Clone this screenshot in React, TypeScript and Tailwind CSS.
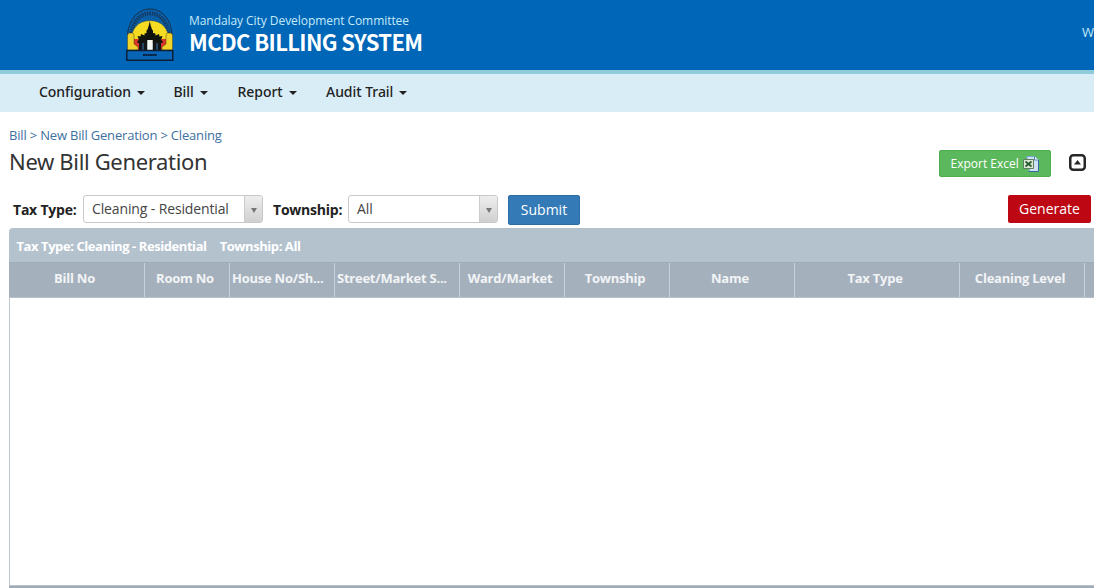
import type { ReactNode } from "react";

function Emblem() {
  return (
    <svg width="50" height="54" viewBox="0 0 50 54" className="block">
      <path d="M2 45V26C4 11 12 .8 25 .8S46 11 47.500 26v19z" fill="#0a5fa8" />
      <path d="M2.500 27C4 11 13 1 25 1s21 10 22 26" fill="none" stroke="#17324f" strokeWidth="1" />
      <path d="M6.500 25C8.500 13 15 5.500 25 5.500S41.500 13 43.500 25" fill="none" stroke="#14395f" strokeWidth="4" strokeDasharray="1.400 1" />
      <path d="M6 33C6 21 13 12.500 25 12.500S44 21 44 33v8H6z" fill="#f5dc22" stroke="#1c4167" strokeWidth=".6" />
      <path d="M9 31h6v11H9zM35.500 31h6v11h-6z" fill="#d8362b" />
      <path d="M24.800 13l.9 4.500 1.300 4 1 1v2.500l2.500.5v2l3.500-1.500.5 2.500 3-.500-1.500 4 1.500 1v2H12.500v-2l1.500-1-1.500-4 3 .5.500-2.500 3.500 1.500v-2l2-.5v-2.500l1-1 1.300-4z" fill="#11140e" />
      <path d="M15 35h20v7H15z" fill="#244563" />
      <path d="M14 34h3v8h-3zM19 34h3v8h-3zM28 34h3v8h-3zM33 34h3v8h-3z" fill="#141414" />
      <path d="M22.300 32h5.400v10h-5.400z" fill="#f4f6f2" />
      <path d="M2.500 27l1.500-2h4l1 2v9l4 3v3H2.500zM47.500 27L46 25h-4l-1 2v9l-4 3v3h10.500z" fill="#f2d329" stroke="#4c4516" strokeWidth=".5" />
      <path d="M1.800 42.500h46v9.700h-46z" fill="#0865b5" stroke="#0b1f3a" strokeWidth="1.500" />
      <path d="M18 47h14" stroke="#0b1f3a" strokeWidth="2.200" strokeDasharray="2 .3" />
    </svg>
  );
}

function Caret() {
  return (
    <svg width="8" height="4" viewBox="0 0 8 4" className="mt-[3px] ml-[6px]">
      <path d="M0 0h8L4 4z" fill="#222" />
    </svg>
  );
}

function NavItem({ children, className }: { children: ReactNode; className: string }) {
  return (
    <div className={`flex shrink-0 items-center whitespace-nowrap ${className}`}>
      {children}
      <Caret />
    </div>
  );
}

function Select({ value, className }: { value: string; className: string }) {
  return (
    <div className={`flex h-7 shrink-0 overflow-hidden rounded-[3px] border border-[#c8c8c8] bg-white ${className}`}>
      <span className="flex-1 pl-2 text-[14px] leading-[26px] tracking-[-0.13px] whitespace-nowrap text-[#444]">{value}</span>
      <span className="flex w-[18px] items-center justify-center border-l border-[#ccc] bg-linear-to-t from-[#d0d0d0] to-[#eeeeee]">
        <svg width="6" height="5" viewBox="0 0 6 5" className="mt-[3px]">
          <path d="M0 0h6L3 5z" fill="#777" />
        </svg>
      </span>
    </div>
  );
}

function ExcelIcon() {
  return (
    <svg width="16" height="16" viewBox="0 0 16 16" className="ml-[4px]">
      <path d="M4 .5h7.500l4 3.500v11.500H7" fill="#cfe2f5" />
      <path d="M4 3V.5h7.500l4 3.500v11.500H6V13" fill="none" stroke="#79a7d3" />
      <path d="M15.500 4v11.500H6" fill="none" stroke="#3268a0" />
      <path d="M11.500.5V4h4" fill="#f7fbff" stroke="#4f83b5" />
      <path d="M.5 3.500h10v9H.5z" fill="#dde9d6" stroke="#5d7f60" />
      <path d="M2.500 5.500l6 5M8.500 5.500l-6 5" stroke="#235a2c" strokeWidth="1.700" />
    </svg>
  );
}

const columns = [
  { label: "Bill No", width: "w-[136px]", align: "text-center pr-[4px]" },
  { label: "Room No", width: "w-[85px]", align: "text-center pr-[4px]" },
  { label: "House No/Sh...", width: "w-[105px]", align: "pl-[2px]" },
  { label: "Street/Market S...", width: "w-[125px]", align: "pl-[2px]" },
  { label: "Ward/Market", width: "w-[105px]", align: "text-center pr-[4px]" },
  { label: "Township", width: "w-[105px]", align: "text-center pr-[4px]" },
  { label: "Name", width: "w-[125px]", align: "text-center pr-[4px]" },
  { label: "Tax Type", width: "w-[165px]", align: "text-center pr-[4px]" },
  { label: "Cleaning Level", width: "w-[125px]", align: "text-center pr-[4px]" },
];

export default function App() {
  return (
    <div className="flex h-[588px] w-full flex-col overflow-hidden bg-white font-['Open_Sans',sans-serif] text-[#222]">
      <header className="flex h-[74px] shrink-0 border-b-4 border-[#90cbda] bg-[#0066b7]">
        <div className="ml-[125px] pt-[8px]">
          <Emblem />
        </div>
        <div className="ml-[14px] pt-[12px] whitespace-nowrap">
          <div className="text-[12px] leading-[17px] tracking-[-0.06px] text-[#c4eafa]">Mandalay City Development Committee</div>
          <div className="font-['Noto_Sans_CJK_SC',sans-serif] text-[22px] leading-[24px] font-bold tracking-[-0.63px] text-white">MCDC BILLING SYSTEM</div>
        </div>
        <div className="mt-[22px] ml-auto w-[12px] overflow-hidden text-[13px] leading-[20px] whitespace-nowrap text-[#c4eafa]">W</div>
      </header>

      <nav className="flex h-[38px] shrink-0 items-center bg-[#d9edf7] pb-[3px] pl-[39px] font-['Noto_Sans',sans-serif] text-[14px] font-medium tracking-[-0.04px]">
        <NavItem className="w-[134.500px]">Configuration</NavItem>
        <NavItem className="w-[64px]">Bill</NavItem>
        <NavItem className="w-[88.500px]">Report</NavItem>
        <NavItem className="w-[90px]">Audit Trail</NavItem>
      </nav>

      <main className="flex min-h-0 flex-1 flex-col pl-[9px]">
        <div className="mt-[14px] h-[19px] shrink-0 text-[13px] leading-[19px] tracking-[-0.18px] text-[#40709f]">Bill &gt; New Bill Generation &gt; Cleaning</div>
        <div className="flex h-[46px] shrink-0">
          <h1 className="mt-[2px] font-['Noto_Sans',sans-serif] text-[22px] leading-[28px] tracking-[-0.34px] text-[#333]">New Bill Generation</h1>
          <div className="mt-[5px] ml-auto flex h-[27px] w-[112px] items-center rounded-[2px] border border-[#4cae4c] bg-[#5cb85c] pl-[10.500px] text-[12px] whitespace-nowrap text-white">
            Export Excel
            <ExcelIcon />
          </div>
          <svg width="17" height="17" viewBox="0 0 17 17" className="mt-[9px] mr-[8px] ml-[18px]">
            <rect x="1.250" y="1.250" width="14.500" height="14.500" rx="3" fill="none" stroke="#272727" strokeWidth="2.500" />
            <path d="M5 10.500h7l-3.500-4.500z" fill="#272727" />
          </svg>
        </div>

        <div className="flex h-[37px] shrink-0 pt-[4px] text-[14px]">
          <span className="w-[74px] pl-1 leading-[30px] font-bold tracking-[-0.22px] whitespace-nowrap">Tax Type:</span>
          <Select value="Cleaning - Residential" className="w-[180px]" />
          <span className="ml-[10px] w-[75px] leading-[30px] font-bold tracking-[-0.22px] whitespace-nowrap">Township:</span>
          <Select value="All" className="w-[150px]" />
          <button className="ml-[10px] h-[30px] w-[72px] rounded-[2px] border border-[#2e6da4] bg-[#337ab7] pb-[2px] text-white">Submit</button>
          <button className="mr-[3px] ml-auto h-[28px] w-[83px] rounded-[2px] bg-[#bd0813] pb-[1px] text-white">Generate</button>
        </div>

        <section className="flex min-h-0 flex-1 flex-col rounded-tl-[4px]">
          <div className="flex h-[34px] shrink-0 items-center gap-[13px] rounded-tl-[4px] bg-[#b4c2ce] pt-[3px] pl-[7.500px] text-[13px] font-bold tracking-[-0.43px] text-white">
            <span>Tax Type: Cleaning - Residential</span>
            <span>Township: All</span>
          </div>
          <div className="flex h-[36px] shrink-0 overflow-hidden border-y border-t-[#9eabb8] border-b-[#b5c0ca] bg-[#a5b0bd]">
            {columns.map((column) => (
              <div
                key={column.label}
                className={`${column.width} ${column.align} shrink-0 overflow-hidden border-r border-[#c9d2dc] text-[13px] leading-[30px] font-bold tracking-[-0.24px] whitespace-nowrap text-[#f2f4f6]`}
              >
                {column.label}
              </div>
            ))}
          </div>
          <div className="min-h-0 flex-1 border-l border-[#bcc6cf] bg-white" />
          <div className="h-[3px] shrink-0 border-t border-[#b9c2cb] bg-[#a0abb8]" />
        </section>
      </main>
    </div>
  );
}
